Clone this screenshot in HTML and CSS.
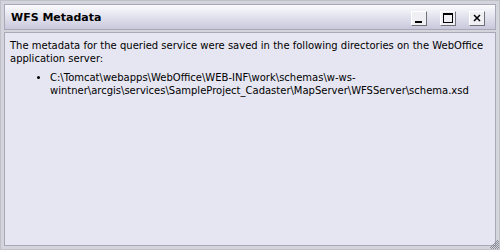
FILE: index.html
```html
<!DOCTYPE html>
<html>
<head><meta charset="utf-8"><link rel="stylesheet" href="styles.css"></head>
<body>
<div class="window">
  <div class="titlebar">
    <span class="title">WFS Metadata</span>
    <div class="buttons">
      <span class="btn"><svg width="16" height="15" viewBox="0 0 16 15"><rect x="4" y="10" width="7" height="2" fill="#000"/></svg></span>
      <span class="btn"><svg width="16" height="15" viewBox="0 0 16 15"><rect x="3.5" y="2.5" width="9" height="9" fill="none" stroke="#000"/><rect x="3" y="2" width="10" height="2" fill="#000"/></svg></span>
      <span class="btn"><svg width="16" height="15" viewBox="0 0 16 15"><path d="M5 4 L11 10 M11 4 L5 10" stroke="#000" stroke-width="1.5"/></svg></span>
    </div>
  </div>
  <div class="content">
    <p>The metadata for the queried service were saved in the following directories on the WebOffice application server:</p>
    <ul>
      <li>C:\Tomcat\webapps\WebOffice\WEB-INF\work\schemas\w-ws-wintner\arcgis\services\SampleProject_Cadaster\MapServer\WFSServer\schema.xsd</li>
    </ul>
  </div>
  <svg class="grip" width="10" height="10" viewBox="0 0 10 10">
    <g fill="#8a8a94">
      <rect x="8" y="1" width="1" height="1"/><rect x="7" y="2" width="1" height="1"/><rect x="9" y="2" width="1" height="1"/>
      <rect x="6" y="3" width="1" height="1"/><rect x="8" y="3" width="1" height="1"/>
      <rect x="5" y="4" width="1" height="1"/><rect x="7" y="4" width="1" height="1"/><rect x="9" y="4" width="1" height="1"/>
      <rect x="4" y="5" width="1" height="1"/><rect x="6" y="5" width="1" height="1"/><rect x="8" y="5" width="1" height="1"/>
      <rect x="3" y="6" width="1" height="1"/><rect x="5" y="6" width="1" height="1"/><rect x="7" y="6" width="1" height="1"/><rect x="9" y="6" width="1" height="1"/>
      <rect x="2" y="7" width="1" height="1"/><rect x="4" y="7" width="1" height="1"/><rect x="6" y="7" width="1" height="1"/><rect x="8" y="7" width="1" height="1"/>
      <rect x="1" y="8" width="1" height="1"/><rect x="3" y="8" width="1" height="1"/><rect x="5" y="8" width="1" height="1"/><rect x="7" y="8" width="1" height="1"/><rect x="9" y="8" width="1" height="1"/>
      <rect x="2" y="9" width="1" height="1"/><rect x="4" y="9" width="1" height="1"/><rect x="6" y="9" width="1" height="1"/><rect x="8" y="9" width="1" height="1"/>
    </g>
  </svg>
</div>
</body>
</html>
```
FILE: styles.css
```css
html, body { margin: 0; padding: 0; }
body { width: 500px; height: 250px; background: #d6d6de; }
.window { position: relative; box-sizing: border-box; width: 500px; height: 250px; padding: 3px; display: flex; flex-direction: column; gap: 2px; background: #d4d4dc; border: 1px solid #c0c0c8; }
.titlebar { height: 24px; border: 1px solid #a8a8b8; background: linear-gradient(#fbfbfe, #c8c8dc); display: flex; align-items: center; justify-content: space-between; padding: 0 10px 0 6px; }
.title { font-family: "DejaVu Sans", sans-serif; font-weight: bold; font-size: 11px; color: #000; }
.buttons { display: flex; gap: 13px; padding-top: 2px; }
.btn { width: 16px; height: 15px; box-sizing: border-box; background: #f0f0f4; border-top: 1px solid #fff; border-left: 1px solid #fff; border-right: 1px solid #707078; border-bottom: 1px solid #707078; display: flex; }
.btn svg { display: block; margin: -1px; }
.content { flex: 1; border: 1px solid #a8a8b8; background: #e6e6f2; padding: 6px 5px; font-family: "DejaVu Sans", sans-serif; font-size: 10px; line-height: 13px; color: #000; }
.content p { margin: 0 0 6px 0; }
.content ul { margin: 0; padding-left: 40px; }
.grip { position: absolute; right: 0; bottom: 0; display: block; }
```
